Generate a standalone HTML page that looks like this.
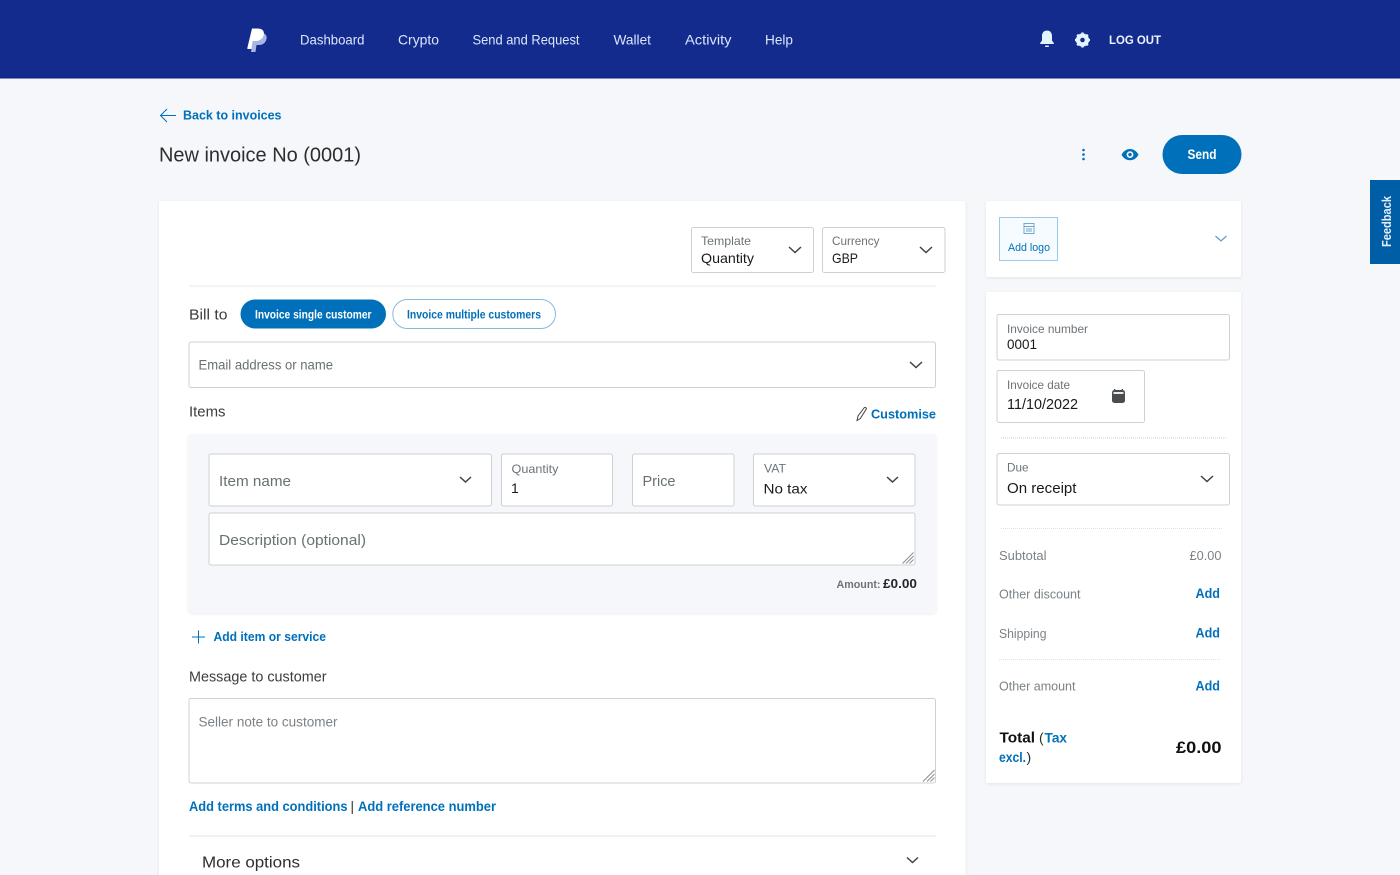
<!DOCTYPE html>
<html lang="en">
<head>
<meta charset="utf-8">
<title>New invoice</title>
<style>
html,body{margin:0;padding:0;width:1400px;height:875px;overflow:hidden;background:#f5f7fa}
svg{display:block}
text{font-family:"Liberation Sans",sans-serif;white-space:pre}
.nav{font-size:14px;fill:#dbe6fb}
.lnk{font-weight:700;fill:#0070ba}
.lab{font-size:12px;fill:#6c7378}
.val{font-size:14px;fill:#1a1a1a}
.ph{font-size:14px;fill:#687173}
.sum{font-size:12.5px;fill:#7b8287}
.dk{fill:#3a3d40}
.box{fill:#fff;stroke:#cdd1d4;stroke-width:1}
.chev{fill:none;stroke:#3f4345;stroke-width:1.5}
</style>
</head>
<body>
<svg width="1400" height="875" viewBox="0 0 1400 875" xmlns="http://www.w3.org/2000/svg">
<defs>
<filter id="s" x="-5%" y="-5%" width="110%" height="110%"><feDropShadow dx="0" dy="1" stdDeviation="1.5" flood-color="#000" flood-opacity=".08"/></filter>
</defs>
<rect width="1400" height="875" fill="#f5f7fa"/>
<rect width="1400" height="78" fill="#132b8c"/>
<rect y="77.5" width="1400" height="1" fill="#0b1f7f"/>

<!-- logo -->
<path d="M254 33h7.500c3.500 0 5.800 2.400 5 6-.9 4-3.800 6-7.500 6h-2.500l-1 7h-4.500z" fill="#a9b6e4"/>
<path d="M252 28.500h6c4 0 6.500 2.300 5.800 6-.7 4.200-4 6.500-8 6.500h-3l-1.300 8h-3.500l-.8-.5z" fill="#fff"/>

<!-- nav -->
<text x="300" y="44.500" class="nav" textLength="64.500" lengthAdjust="spacingAndGlyphs">Dashboard</text>
<text x="398" y="44.500" class="nav" textLength="41" lengthAdjust="spacingAndGlyphs">Crypto</text>
<text x="472.500" y="44.500" class="nav" textLength="107" lengthAdjust="spacingAndGlyphs">Send and Request</text>
<text x="613.500" y="44.500" class="nav" textLength="37.500" lengthAdjust="spacingAndGlyphs">Wallet</text>
<text x="685" y="44.500" class="nav" textLength="46.500" lengthAdjust="spacingAndGlyphs">Activity</text>
<text x="765" y="44.500" class="nav" textLength="28" lengthAdjust="spacingAndGlyphs">Help</text>

<!-- bell -->
<path d="M1047 30.500c-3.500 0-5 2.800-5 5.500v4.500l-1.800 2.500v1h13.600v-1l-1.800-2.500V36c0-2.700-1.500-5.500-5-5.500z" fill="#e3f4ff"/>
<rect x="1045" y="45.500" width="4" height="1.500" rx=".7" fill="#e3f4ff"/>
<!-- gear -->
<circle cx="1082.500" cy="40" r="4.900" fill="none" stroke="#e3f4ff" stroke-width="3.400"/>
<path d="M1082.500 32.500v15M1075 40h15M1077.200 34.700l10.600 10.600M1087.800 34.700l-10.600 10.600" stroke="#e3f4ff" stroke-width="2.400"/>
<circle cx="1082.500" cy="40" r="2.300" fill="#132b8c"/>
<text x="1109" y="44" font-size="12" font-weight="700" fill="#eef4ff" textLength="52" lengthAdjust="spacingAndGlyphs">LOG OUT</text>

<!-- back -->
<path d="M176 115.500h-15M167 109l-6.500 6.500 6.500 6.500" fill="none" stroke="#0070ba" stroke-width="1"/>
<text x="183" y="119.500" font-size="13" class="lnk" textLength="98.500" lengthAdjust="spacingAndGlyphs">Back to invoices</text>
<text x="159" y="161.500" font-size="20" fill="#2c2e2f" textLength="202" lengthAdjust="spacingAndGlyphs">New invoice No (0001)</text>

<!-- actions -->
<circle cx="1083.500" cy="150" r="1.300" fill="#0070ba"/><circle cx="1083.500" cy="154.500" r="1.300" fill="#0070ba"/><circle cx="1083.500" cy="159" r="1.300" fill="#0070ba"/>
<path d="M1121.500 154.700c2-3.700 5-5.700 8.500-5.700s6.500 2 8.500 5.700c-2 3.600-5 5.500-8.500 5.500s-6.500-1.900-8.500-5.500z" fill="#0070ba"/>
<circle cx="1130" cy="154.600" r="3.400" fill="#f5f7fa"/><circle cx="1130" cy="154.600" r="1.700" fill="#0070ba"/>
<rect x="1162.500" y="135" width="79" height="39" rx="19.500" fill="#0070ba"/>
<text x="1202" y="159" font-size="13.500" font-weight="700" fill="#fff" text-anchor="middle" textLength="29" lengthAdjust="spacingAndGlyphs">Send</text>

<!-- feedback -->
<rect x="1370" y="180" width="30" height="84" fill="#005ea6"/>
<text transform="translate(1391 247) rotate(-90)" font-size="13" font-weight="700" fill="#e6eff6" textLength="51" lengthAdjust="spacingAndGlyphs">Feedback</text>

<!-- main card -->
<rect x="159" y="201" width="806.500" height="680" rx="2" fill="#fff" filter="url(#s)"/>

<rect x="691.500" y="227.500" width="122" height="45" rx="2" class="box"/>
<text x="701" y="245" class="lab" textLength="50" lengthAdjust="spacingAndGlyphs">Template</text>
<text x="701" y="263" class="val" textLength="53" lengthAdjust="spacingAndGlyphs">Quantity</text>
<path d="M789 247l6 5.500 6-5.500" class="chev"/>
<rect x="822.500" y="227.500" width="122.500" height="45" rx="2" class="box"/>
<text x="832" y="245" class="lab" textLength="47.500" lengthAdjust="spacingAndGlyphs">Currency</text>
<text x="832" y="263" class="val" textLength="26" lengthAdjust="spacingAndGlyphs">GBP</text>
<path d="M920 247l6 5.500 6-5.500" class="chev"/>
<rect x="189" y="285.500" width="747" height="1.200" fill="#eaedef"/>

<text x="189" y="319.500" font-size="14.500" class="dk" textLength="38.500" lengthAdjust="spacingAndGlyphs">Bill to</text>
<rect x="240.500" y="299.500" width="145.500" height="29" rx="14.500" fill="#0070ba"/>
<text x="255" y="318.500" font-size="11.500" font-weight="700" fill="#fff" textLength="116.500" lengthAdjust="spacingAndGlyphs">Invoice single customer</text>
<rect x="392.800" y="299.500" width="162.700" height="29" rx="14.500" fill="#fff" stroke="#87b9dc"/>
<text x="407" y="318.500" font-size="11.500" font-weight="700" fill="#0070ba" textLength="134" lengthAdjust="spacingAndGlyphs">Invoice multiple customers</text>

<rect x="189" y="342" width="746.500" height="45.500" rx="2" class="box"/>
<text x="198.500" y="369.500" class="ph" textLength="134.500" lengthAdjust="spacingAndGlyphs">Email address or name</text>
<path d="M910 362l6 5.500 6-5.500" class="chev"/>

<text x="189" y="416.500" font-size="14.500" class="dk" textLength="36.500" lengthAdjust="spacingAndGlyphs">Items</text>
<path d="M857 420.500l1-4.500 6-8c1-1.200 2.700-.4 2.300 1l-6 9.500z" fill="none" stroke="#444" stroke-width="1"/>
<text x="871" y="418.500" font-size="13" class="lnk" textLength="65" lengthAdjust="spacingAndGlyphs">Customise</text>

<!-- items panel -->
<rect x="188.500" y="434" width="747.500" height="179" rx="3" fill="#f5f7fa" filter="url(#s)"/>
<rect x="209" y="454" width="282.500" height="52" rx="2" class="box"/>
<text x="219" y="486" class="ph" textLength="72" lengthAdjust="spacingAndGlyphs" style="font-size:14.500px">Item name</text>
<path d="M460 477l5.500 5 5.500-5" class="chev"/>
<rect x="501.500" y="454" width="111" height="52" rx="2" class="box"/>
<text x="511.500" y="473" class="lab" textLength="47" lengthAdjust="spacingAndGlyphs">Quantity</text>
<text x="511" y="493" class="val">1</text>
<rect x="632.500" y="454" width="101.500" height="52" rx="2" class="box"/>
<text x="642.500" y="486" class="ph" style="font-size:14.500px" textLength="33" lengthAdjust="spacingAndGlyphs">Price</text>
<rect x="753.500" y="454" width="161.500" height="52" rx="2" class="box"/>
<text x="764" y="472.500" class="lab" textLength="22" lengthAdjust="spacingAndGlyphs">VAT</text>
<text x="763.500" y="493.500" class="val" textLength="44" lengthAdjust="spacingAndGlyphs">No tax</text>
<path d="M887 477l5.500 5 5.500-5" class="chev"/>
<rect x="209" y="513" width="706" height="52" rx="2" class="box"/>
<text x="219" y="545" class="ph" style="font-size:15px" textLength="147" lengthAdjust="spacingAndGlyphs">Description (optional)</text>
<path d="M902.500 563.500l11-11M906 563.500l7.500-7.500M909.500 563.500l4-4" stroke="#8b8f92" stroke-width="1"/>
<text x="836.500" y="588" font-size="11" font-weight="700" fill="#6c7378" textLength="44" lengthAdjust="spacingAndGlyphs">Amount:</text>
<text x="883" y="588" font-size="13" font-weight="700" fill="#22262a" textLength="34" lengthAdjust="spacingAndGlyphs">£0.00</text>

<path d="M198.500 630.500v13M192 637h13" stroke="#0070ba" stroke-width="1"/>
<text x="213.500" y="641" font-size="13" class="lnk" textLength="112.500" lengthAdjust="spacingAndGlyphs">Add item or service</text>

<text x="189" y="681.500" font-size="14.500" class="dk" textLength="137.500" lengthAdjust="spacingAndGlyphs">Message to customer</text>
<rect x="189" y="698.500" width="746.500" height="84.500" rx="2" class="box"/>
<text x="198.500" y="726.500" class="ph" style="font-size:13.500px;fill:#7b8287" textLength="139" lengthAdjust="spacingAndGlyphs">Seller note to customer</text>
<path d="M923 781.500l11.500-11.500M927 781.500l7.500-7.500M930.500 781.500l4-4" stroke="#8b8f92" stroke-width="1"/>

<text x="189" y="811" font-size="13.500" class="lnk" textLength="158.500" lengthAdjust="spacingAndGlyphs">Add terms and conditions</text>
<text x="350.500" y="811" font-size="13.500" fill="#2c2e2f">|</text>
<text x="358" y="811" font-size="13.500" class="lnk" textLength="138" lengthAdjust="spacingAndGlyphs">Add reference number</text>
<rect x="189" y="835.500" width="747" height="1.200" fill="#e4e7e9"/>
<text x="202" y="867.500" font-size="16" fill="#2c2e2f" textLength="98" lengthAdjust="spacingAndGlyphs">More options</text>
<path d="M907 857.500l5.500 5 5.500-5" class="chev"/>

<!-- side card 1 -->
<rect x="986" y="201" width="255" height="76" rx="2" fill="#fff" filter="url(#s)"/>
<rect x="999.500" y="217.500" width="58" height="43" fill="#f6fbff" stroke="#9cc9e6"/>
<rect x="1024" y="223.500" width="10" height="10" fill="none" stroke="#6fa9cf" stroke-width="1"/>
<path d="M1024 226.500h10M1026 229h6M1026 231h6" stroke="#6fa9cf" stroke-width="1"/>
<text x="1008" y="251" font-size="11" fill="#0070ba" textLength="42" lengthAdjust="spacingAndGlyphs">Add logo</text>
<path d="M1215.500 236l5.500 5 5.500-5" fill="none" stroke="#5a9fd0" stroke-width="1.200"/>

<!-- side card 2 -->
<rect x="986" y="292" width="255" height="491" rx="2" fill="#fff" filter="url(#s)"/>
<rect x="997" y="314.500" width="232.500" height="45.500" rx="2" class="box"/>
<text x="1007" y="333" class="lab" textLength="81" lengthAdjust="spacingAndGlyphs">Invoice number</text>
<text x="1007" y="349" class="val" textLength="30" lengthAdjust="spacingAndGlyphs">0001</text>
<rect x="997" y="370.500" width="147.500" height="52" rx="2" class="box"/>
<text x="1007" y="389" class="lab" textLength="63" lengthAdjust="spacingAndGlyphs">Invoice date</text>
<text x="1007" y="409" class="val" style="font-size:15px" textLength="71" lengthAdjust="spacingAndGlyphs">11/10/2022</text>
<rect x="1112" y="390" width="13" height="13" rx="2.500" fill="#4a4d50"/>
<rect x="1113.500" y="392" width="10" height="2" fill="#e8e9ea"/>
<rect x="1114" y="389" width="1.400" height="2" fill="#4a4d50"/><rect x="1121.600" y="389" width="1.400" height="2" fill="#4a4d50"/>
<path d="M1001 438h225" stroke="#cfd3d6" stroke-width="1" stroke-dasharray="1 1"/>
<rect x="997" y="453.500" width="232.500" height="51.500" rx="2" class="box"/>
<text x="1007" y="471.500" class="lab" textLength="21.500" lengthAdjust="spacingAndGlyphs">Due</text>
<text x="1007" y="493" class="val" style="font-size:15px" textLength="69.500" lengthAdjust="spacingAndGlyphs">On receipt</text>
<path d="M1201 476l6 5.500 6-5.500" class="chev"/>
<path d="M1001 528.500h221" stroke="#dfe2e4" stroke-width="1" stroke-dasharray="1 1"/>

<text x="999" y="560" class="sum" textLength="47.500" lengthAdjust="spacingAndGlyphs">Subtotal</text>
<text x="1189.500" y="560" class="sum" textLength="32" lengthAdjust="spacingAndGlyphs">£0.00</text>
<text x="999" y="598.500" class="sum" textLength="81.500" lengthAdjust="spacingAndGlyphs">Other discount</text>
<text x="1195.500" y="598" font-size="13.500" class="lnk" textLength="24.500" lengthAdjust="spacingAndGlyphs">Add</text>
<text x="999" y="638" class="sum" textLength="47.500" lengthAdjust="spacingAndGlyphs">Shipping</text>
<text x="1195.500" y="637.500" font-size="13.500" class="lnk" textLength="24.500" lengthAdjust="spacingAndGlyphs">Add</text>
<path d="M999 659.500h222" stroke="#dfe2e4" stroke-width="1" stroke-dasharray="1 1"/>
<text x="999" y="690.500" class="sum" textLength="76.500" lengthAdjust="spacingAndGlyphs">Other amount</text>
<text x="1195.500" y="690.500" font-size="13.500" class="lnk" textLength="24.500" lengthAdjust="spacingAndGlyphs">Add</text>
<text x="999.500" y="742.500" font-size="15" font-weight="700" fill="#111" textLength="35.500" lengthAdjust="spacingAndGlyphs">Total</text>
<text x="1039" y="742.500" font-size="14" fill="#2c2e2f">(</text>
<text x="1044.500" y="742.500" font-size="13.500" class="lnk" textLength="22.500" lengthAdjust="spacingAndGlyphs">Tax</text>
<text x="999" y="762" font-size="13.500" class="lnk" textLength="27" lengthAdjust="spacingAndGlyphs">excl.</text>
<text x="1026.500" y="762" font-size="14" fill="#2c2e2f">)</text>
<text x="1176" y="753" font-size="17" font-weight="700" fill="#111" textLength="45.500" lengthAdjust="spacingAndGlyphs">£0.00</text>
</svg>
</body>
</html>
